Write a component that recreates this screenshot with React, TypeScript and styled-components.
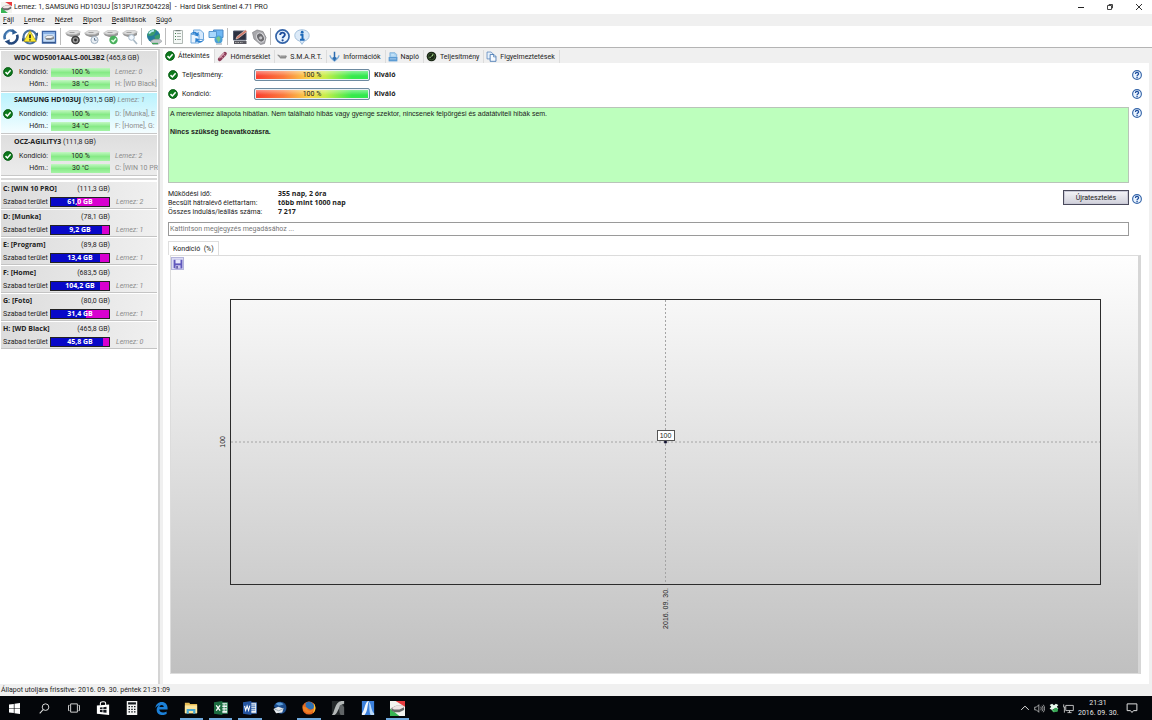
import React from "react";
import styled, { createGlobalStyle, css } from "styled-components";

const UI = `Roboto, "Open Sans", sans-serif`;
const UI_BOLD = `"Open Sans", "Noto Sans", sans-serif`;
const CLASSIC = `"Liberation Sans", Arial, sans-serif`;

const GlobalStyle = createGlobalStyle`
  *, *::before, *::after { box-sizing: border-box; }
  body { margin: 0; background: #fff; }
  button, input { font: inherit; color: inherit; margin: 0; }
  svg { display: block; flex: none; }
  ul, dl, dd, h1, h2, p { margin: 0; padding: 0; }
  ul { list-style: none; }
`;

const Screen = styled.div`
  display: flex;
  flex-direction: column;
  min-height: 100vh;
  background: #f0f0f0;
  color: #222;
  font: 7px/10px ${UI};
  white-space: nowrap;
`;

const boldText = css`
  font-family: ${UI_BOLD};
  font-weight: 700;
`;

const plainButton = css`
  border: 0;
  padding: 0;
  background: none;
  display: flex;
  align-items: center;
  justify-content: center;
`;

/* ---------- window frame ---------- */

const TitleBar = styled.header`
  display: flex;
  align-items: center;
  height: 14px;
  padding-left: 1px;
  gap: 2px;
  background: #fff;
`;

const Title = styled.h1`
  flex: 1;
  font: inherit;
  white-space: pre;
`;

const WindowButton = styled.button`
  ${plainButton}
  width: 27px;
  height: 14px;
`;

const MenuBar = styled.nav`
  display: flex;
  gap: 10px;
  height: 12px;
  padding-left: 3px;
`;

const MenuItem = styled.button`
  ${plainButton}
`;

const ToolBar = styled.div`
  display: flex;
  align-items: center;
  height: 22px;
  padding-left: 1px;
  background: #fff;
  border-bottom: 1px solid #b4b4b4;
`;

const ToolButton = styled.button`
  ${plainButton}
  width: 19px;
  height: 20px;
`;

const ToolSeparator = styled.span`
  width: 1px;
  height: 17px;
  margin: 0 2px;
  background: #bcbcbc;
`;

const Body = styled.div`
  display: flex;
  flex: 1;
  padding-top: 1px;
`;

/* ---------- sidebar ---------- */

const Sidebar = styled.aside`
  flex: none;
  width: 160px;
  padding: 1px 1px 0;
  overflow: hidden;
  background: #fff;
  border-right: 2px solid #d4d4d4;
  border-top: 1px solid #c4c4c4;
`;

const DiskList = styled.ul`
  display: flex;
  flex-direction: column;
  gap: 1px;
  padding-bottom: 2px;
  margin-bottom: 2px;
  border-bottom: 2px solid #d8d8d8;
`;

const DiskCard = styled.li<{ $selected?: boolean }>`
  height: 41px;
  border-bottom: 1px solid #c8c8c8;
  background: ${(p) =>
    p.$selected
      ? "linear-gradient(#b9f2fd, #f4fdff)"
      : "linear-gradient(#dedede, #ececec)"};
`;

const DiskName = styled.h2`
  height: 15px;
  padding-left: 13px;
  font: 400 7px/13px ${UI};
  b { ${boldText} }
`;

const Faint = styled.span`
  color: #8c8c8c;
`;

const FaintItalic = styled(Faint)`
  font-style: italic;
`;

const DiskStat = styled.div`
  display: grid;
  grid-template-columns: 13px 34px 62px 1fr;
  align-items: center;
  height: 12px;
  svg { justify-self: center; }
`;

const StatLabel = styled.span`
  text-align: right;
`;

const GreenBar = styled.span`
  height: 9px;
  margin-left: 3px;
  line-height: 9px;
  text-align: center;
  background: linear-gradient(#c3f8c3, #86ea86 50%, #a5f3a5);
`;

const StatNote = styled.span`
  padding-left: 5px;
`;

const VolumeCard = styled.li`
  display: grid;
  grid-template-columns: 47px 60px 1fr;
  align-items: center;
  height: 27px;
  margin-top: 1px;
  padding-left: 2px;
  border-bottom: 1px solid #c4c4c4;
  background: linear-gradient(100deg, #dcdcdc, #f0f0f0);
`;

const VolumeName = styled.b`
  ${boldText}
`;

const VolumeSize = styled.span`
  text-align: right;
`;

const UsageBar = styled.span<{ $used: number }>`
  height: 10px;
  border: 1px solid #222;
  color: #fff;
  ${boldText}
  line-height: 8px;
  text-align: center;
  background: linear-gradient(
    90deg,
    #0808c8 ${(p) => p.$used}%,
    #d800d0 ${(p) => p.$used}%
  );
`;

const VolumeDisk = styled(FaintItalic)`
  padding-left: 6px;
`;

/* ---------- main pane ---------- */

const Main = styled.main`
  display: flex;
  flex: 1;
  flex-direction: column;
  min-width: 0;
  padding: 0 3px 0 3px;
`;

const TabStrip = styled.div`
  display: flex;
  align-items: flex-end;
  height: 14px;
`;

const TabButton = styled.button<{ $active?: boolean }>`
  ${plainButton}
  gap: 3px;
  height: ${(p) => (p.$active ? 14 : 13)}px;
  padding: 0 4px 0 2px;
  border-right: 1px solid #dcdcdc;
  background: ${(p) => (p.$active ? "#fff" : "#f0f0f0")};
`;

const Page = styled.section`
  display: flex;
  flex: 1;
  flex-direction: column;
  padding: 2px 7px 10px 5px;
  background: #fff;
`;

const HelpRow = styled.div`
  display: grid;
  grid-template-columns: 1fr 13px;
  align-items: start;
`;

const FactsHelpRow = styled(HelpRow)`
  padding-top: 6px;
`;

const HelpButton = styled.button`
  ${plainButton}
  width: 10px;
  height: 19px;
  margin-left: 3px;
`;

const Gauge = styled.div`
  display: grid;
  grid-template-columns: 14px 72px 116px 1fr;
  align-items: center;
  height: 19px;
`;

const GaugeBar = styled.span`
  height: 12px;
  border: 1px solid #6d8aa0;
  border-radius: 2px;
  box-shadow: inset 0 0 0 1px #e8f0f4;
  line-height: 10px;
  text-align: center;
  background: linear-gradient(rgba(255, 255, 255, 0.5), rgba(255, 255, 255, 0) 60%),
    linear-gradient(90deg, #fa3b2e, #fb7a3c 25%, #fbd84a 48%, #c6ee4a 62%, #35ea4b 85%, #30e850);
`;

const GaugeVerdict = styled.b`
  ${boldText}
  padding-left: 4px;
`;

const Report = styled.div`
  height: 76px;
  margin-top: 4px;
  padding: 1px 1px;
  border: 1px solid #b9c4b9;
  background: #bdffbd;
  font: 7px/9px ${CLASSIC};
  p + p { margin-top: 9px; font-weight: 700; }
`;

const Facts = styled.dl`
  display: grid;
  grid-template-columns: 110px 1fr;
  grid-auto-rows: 9px;
  align-items: baseline;
  line-height: 9px;
  dd { ${boldText} }
`;

const FactRow = styled.div`
  display: flex;
  justify-content: space-between;
  align-items: flex-start;
`;

const RetestButton = styled.button`
  ${plainButton}
  width: 66px;
  height: 15px;
  margin-top: 1px;
  border: 1px solid #4a4a5c;
  box-shadow: inset 0 0 0 1px #c9c9d6;
  background: linear-gradient(#f4f4f8, #d0d0da);
`;

const NoteInput = styled.input`
  width: 100%;
  height: 14px;
  margin-top: 6px;
  padding: 0 1px;
  border: 1px solid #9a9a9a;
  border-radius: 0;
  background: #fff;
  &::placeholder { color: #777; opacity: 1; }
`;

const ChartTab = styled.button`
  ${plainButton}
  align-self: flex-start;
  height: 14px;
  margin-top: 5px;
  padding: 0 4px;
  border: 1px solid #dedede;
  border-bottom: 0;
  white-space: pre;
`;

const ChartPanel = styled.div`
  display: flex;
  flex: 1;
  flex-direction: column;
  margin: 0 1px 0 2px;
  border: 1px solid #dcdcdc;
  border-right: 3px solid #d6d6d6;
  background: linear-gradient(#fefefe, #c0c0c0);
`;

const SaveButton = styled.button`
  ${plainButton}
  width: 13px;
  height: 13px;
  margin: 1px 0 0;
  border: 1px solid #b4b4dc;
  background: #dcdcf4;
`;

const ChartGrid = styled.div`
  display: grid;
  flex: 1;
  grid-template-columns: 59px 1fr 37px;
  grid-template-rows: 1fr 88px;
  margin-top: 29px;
  font: 7px/8px ${CLASSIC};
`;

const VerticalText = styled.span`
  writing-mode: vertical-rl;
  transform: rotate(180deg);
`;

const YAxis = styled.div`
  display: flex;
  align-items: center;
  justify-content: flex-end;
  padding-right: 3px;
`;

const XAxis = styled.div`
  display: flex;
  grid-column: 2;
  align-items: flex-start;
  justify-content: center;
  padding-top: 3px;
`;

const Plot = styled.div`
  position: relative;
  border: 1px solid #2c2c2c;
  svg { width: 100%; height: 100%; position: absolute; }
`;

const PointLabel = styled.span`
  position: absolute;
  left: 50%;
  top: 50%;
  width: 18px;
  height: 11px;
  margin: -12px 0 0 -9px;
  border: 1px solid #555;
  line-height: 9px;
  text-align: center;
  background: #fff;
`;

const StatusBar = styled.footer`
  height: 12px;
  padding-left: 1px;
  line-height: 12px;
`;

/* ---------- taskbar ---------- */

const TaskBar = styled.nav`
  display: flex;
  justify-content: space-between;
  height: 24px;
  background: #04060a;
  color: #e8e8e8;
`;

const TaskButtons = styled.div`
  display: grid;
  grid-template-columns: repeat(14, 1fr);
  width: 412px;
`;

const TaskButton = styled.button<{ $running?: boolean }>`
  ${plainButton}
  margin: 0 3px;
  border-bottom: 2px solid ${(p) => (p.$running ? "#6fa8dc" : "transparent")};
  padding-top: 2px;
`;

const Tray = styled.div`
  display: flex;
  align-items: center;
  gap: 4px;
  padding-right: 14px;
`;

const Clock = styled.time`
  width: 40px;
  margin-right: 4px;
  text-align: center;
`;

/* ---------- icons ---------- */

const Icon = ({
  size = 16,
  box = 16,
  children,
}: {
  size?: number;
  box?: number;
  children: React.ReactNode;
}) => (
  <svg width={size} height={size} viewBox={`0 0 ${box} ${box}`} fill="none" aria-hidden="true">
    {children}
  </svg>
);

const CheckIcon = () => (
  <Icon size={10}>
    <circle cx="8" cy="8" r="7.5" fill="#0c7a1c" />
    <circle cx="8" cy="8" r="7" stroke="#0a4c14" />
    <path d="M4 8.2l3 3 5.2-6" stroke="#fff" strokeWidth="2.4" />
  </Icon>
);

const HelpIcon = ({ size = 10 }: { size?: number }) => (
  <Icon size={size}>
    <circle cx="8" cy="8" r="7" fill="#eaf4ff" stroke="#3464a8" strokeWidth="1.8" />
    <path d="M5.5 6.500c0-3.600 5-3.400 5-.3 0 1.900-2.400 1.800-2.400 3.700" stroke="#1c4c9c" strokeWidth="2" />
    <circle cx="8.100" cy="12.100" r="1.200" fill="#1c4c9c" />
  </Icon>
);

const InfoIcon = () => (
  <Icon>
    <path d="M8 .8c4.300 0 7.200 2.400 7.200 5.700 0 3-2.400 5-5 5.600L8 15.400l-2.200-3.300c-2.600-.6-5-2.600-5-5.600C.8 3.200 3.700.8 8 .8z" fill="#dceaf8" stroke="#a4c0dc" />
    <circle cx="8.200" cy="3.200" r="1.400" fill="#1c68b8" />
    <path d="M6.300 5.800h2.200v4.700M6 10.700h4.600" stroke="#1c68b8" strokeWidth="2" />
  </Icon>
);

const AnchorInfoIcon = () => (
  <Icon size={11}>
    <path d="M1.500 6c0 4 3.500 6 6.500 8.500 3-2.500 6.500-4.500 6.500-8.500" stroke="#7cacd8" strokeWidth="1.800" />
    <path d="M8 1v11M5.500 9.500L8 13l2.500-3.500" stroke="#2c6cb0" strokeWidth="2.200" />
  </Icon>
);

const RefreshIcon = () => (
  <Icon>
    <path d="M2 10.200A6.300 6.300 0 0 1 10.500 2.200" stroke="#3c70a8" strokeWidth="2.600" />
    <path d="M14 5.800A6.300 6.300 0 0 1 5.500 13.800" stroke="#24487c" strokeWidth="2.600" />
    <path d="M9.500 0l4.800 3.500-5 2.300z" fill="#2c5c94" />
    <path d="M6.500 16l-4.800-3.500 5-2.300z" fill="#24487c" />
    <path d="M3 6A5.800 5.800 0 0 1 7.500 2.200" stroke="#9cc4ec" strokeWidth=".8" />
  </Icon>
);

const RefreshWarnIcon = () => (
  <Icon>
    <circle cx="8" cy="8" r="6.500" stroke="#48709c" strokeWidth="2.200" />
    <path d="M13.500 4.500l2.500-1v4zM2.500 11.500L0 12.500v-4z" fill="#2c5080" />
    <path d="M8 1.800l6.200 10.700H1.800z" fill="#fcec30" stroke="#b0a020" strokeWidth=".8" />
    <path d="M8 5.500v3.700M8 10.200v1.400" stroke="#222" strokeWidth="1.600" />
  </Icon>
);

const DiskPanelIcon = () => (
  <Icon>
    <path d="M1.500 2.500h13v11.500h-13z" fill="#c4dcf8" stroke="#3c64a4" strokeWidth="1.400" />
    <path d="M2 3h12v2H2z" fill="#88b0e4" />
    <path d="M3.500 8l2.500-1.500h5.500l1.500 1.500v1.700l-3 1.300H5.500z" fill="#84888c" />
    <path d="M4 8l2.300-1h5l1 1-2.500 1H5z" fill="#f0f0f0" />
    <path d="M2 13.300h12" stroke="#2c4c80" />
  </Icon>
);

const DriveShape = () => (
  <>
    <path d="M.5 4.500L2 6.500 6 8h5l4-2V3.500z" fill="#989898" />
    <path d="M.5 4l4-2.500h8.500L15.500 3l-4.500 2.500H4z" fill="#dcdcdc" stroke="#b0b0b0" strokeWidth=".5" />
    <path d="M4.500 3.500h5" stroke="#a0a0a0" />
  </>
);

const DriveDarkIcon = () => (
  <Icon>
    <DriveShape />
    <circle cx="10.500" cy="11" r="3.600" fill="#9a9a9a" stroke="#3c3c3c" strokeWidth="1.500" />
    <circle cx="10.500" cy="11" r="1.400" fill="#2c2c2c" />
  </Icon>
);

const DriveClockIcon = () => (
  <Icon>
    <DriveShape />
    <circle cx="10.500" cy="11" r="3.600" fill="#e8eef4" stroke="#a0b0c0" />
    <path d="M10.500 9v2.200h2" stroke="#607890" />
  </Icon>
);

const DriveOkIcon = () => (
  <Icon>
    <DriveShape />
    <circle cx="10.500" cy="11" r="4.200" fill="#48b05c" />
    <path d="M8.500 11l1.700 1.700L13 9.500" stroke="#e4ffe4" strokeWidth="1.500" />
  </Icon>
);

const DriveSearchIcon = () => (
  <Icon>
    <DriveShape />
    <circle cx="9.500" cy="8.500" r="2.800" fill="#f2f8fe" stroke="#a8bccc" />
    <path d="M11.500 11l3.500 4" stroke="#a8b8c4" strokeWidth="1.600" />
  </Icon>
);

const GlobeIcon = () => (
  <Icon>
    <circle cx="7.500" cy="7" r="6.500" fill="#247c9c" />
    <path d="M2.500 3c3-3 7-3 8-1.500L8 6l-3 1-3.700-.5zM8.500 7l5.300-2c.8 4-1.500 7-4 8z" fill="#3c9c6c" />
    <path d="M3 4.500C4.500 2 6 1.800 8 1.500" stroke="#b8ecf4" strokeWidth="1.800" />
    <path d="M4.500 12l3.500-1.700h6l2 2-4 3H7z" fill="#c4c8cc" stroke="#84888c" strokeWidth=".5" />
    <path d="M6 14.500h6" stroke="#3ca458" strokeWidth="1.300" />
  </Icon>
);

const ReportIcon = () => (
  <Icon>
    <path d="M3.500 1.500h9v13h-9z" fill="#f4f8f6" stroke="#b0b8b4" />
    <path d="M7 4.500h4M7 7.500h4M7 10.500h4" stroke="#a4b0a8" />
    <path d="M5 4.500h1M5 7.500h1M5 10.500h1" stroke="#3c7c48" />
    <path d="M5.500 1h5v1.200h-5z" fill="#74807c" />
  </Icon>
);

const SendIcon = () => (
  <Icon>
    <path d="M4.500 1h7l3 3v6.500h-10z" fill="#d4e8fc" stroke="#70a8dc" />
    <path d="M2 5.500h8v8.500H2z" fill="#eaf4fe" stroke="#70a8dc" />
    <path d="M1 5.500C3 2 6.500 2 8 4l1.800-1-.5 4.500-4-1.200L7 5.500c-1.500-1.700-4-1-6 0zM15.500 10c-2 4-5.500 4.500-7.500 2.500l-1.800 1.200L6.500 9l4 1.300-1.500 1c1.500 1.500 4.500.7 6.500-1.300z" fill="#2c80d0" />
  </Icon>
);

const NetworkIcon = () => (
  <Icon>
    <path d="M5.500 1H15v7.500H5.500z" fill="#70b8f4" stroke="#4888c8" />
    <path d="M1 2.500h7.500v6H1z" fill="#a8d8fc" stroke="#5898d0" />
    <circle cx="10.500" cy="10.500" r="4" fill="#4ca0d8" />
    <path d="M8 9l3-2 1.500 3-2 3.500z" fill="#74c88c" />
    <path d="M8 15h6" stroke="#b0b8c0" strokeWidth="1.400" />
  </Icon>
);

const MonitorPenIcon = () => (
  <Icon>
    <path d="M1.500 2h12.500v9H1.500z" fill="#2c3040" stroke="#50586c" />
    <path d="M2 12h12.500v3H2z" fill="#585860" />
    <path d="M3 13.500h8" stroke="#b0b0b0" strokeDasharray="1.500 1" />
    <path d="M4 10l1-2.500L13.500 1 15 2.500 6.700 9z" fill="#d07868" stroke="#f4dcd4" strokeWidth=".6" />
  </Icon>
);

const SpeakerIcon = () => (
  <Icon>
    <path d="M1.500 3.500L6 1l6 1.500 3 6-1.500 6-4 1L3 10z" fill="#a8a8ac" stroke="#808084" strokeWidth=".7" />
    <ellipse cx="9.500" cy="8.500" rx="3.600" ry="4.800" transform="rotate(-30 9.500 8.500)" fill="#6c6c70" stroke="#dcdce0" />
    <circle cx="9.700" cy="8.800" r="1.600" fill="#c4c4c8" />
  </Icon>
);

const ThermoIcon = () => (
  <Icon size={11}>
    <path d="M4 12L11.500 4" stroke="#8c3c58" strokeWidth="5.500" strokeLinecap="round" />
    <path d="M3.500 10.500L10.500 3" stroke="#e0acbc" strokeWidth="1.500" />
    <path d="M6 8l3.500 3.500M9 5l3.500 3.500" stroke="#ecccd4" />
  </Icon>
);

const SmartIcon = () => (
  <Icon size={10}>
    <path d="M0 4.500h3l2 1.500 2-1h6l3 1.500-2 4H5.500L3 7.500z" fill="#8c8c8c" />
    <path d="M5 6.700l2.500-.7H13" stroke="#dcdcdc" />
  </Icon>
);

const LogIcon = () => (
  <Icon size={10}>
    <path d="M3 1h8l3 3v8H3z" fill="#a4d0f0" stroke="#6ca4d4" />
    <path d="M1 8h14v7H1z" fill="#5c9cd4" />
    <path d="M5 4h5M5 6h7M3 11h10" stroke="#d8ecfc" />
  </Icon>
);

const PerformanceIcon = () => (
  <Icon size={11}>
    <circle cx="8" cy="8" r="7" fill="#182414" />
    <circle cx="8" cy="8" r="4.800" stroke="#48683c" />
    <path d="M8 8l2.500-3M5 9h2" stroke="#b0e890" strokeWidth="1.500" />
  </Icon>
);

const CopyIcon = () => (
  <Icon size={11}>
    <path d="M1.500 1.500h6l2 2v8h-8z" fill="#e8f2fc" stroke="#4878b4" />
    <path d="M6 5h5.500l3 3v7H6z" fill="#f6faff" stroke="#3c70ac" strokeWidth="1.200" />
    <path d="M11 5v3.500h3.500" stroke="#3c70ac" />
  </Icon>
);

const SaveIcon = () => (
  <Icon size={10}>
    <path d="M1 1h14v14H3l-2-2z" fill="#6058bc" />
    <path d="M4 1h8v6H4z" fill="#e8e8fc" />
    <path d="M4 10h8v5H4z" fill="#d0ccf0" />
    <path d="M5.500 11h2v4h-2z" fill="#383088" />
  </Icon>
);

const SentinelIcon = ({ size = 11 }: { size?: number }) => (
  <Icon size={size}>
    <path d="M0 0h16v16H0z" fill="#f4f4f0" />
    <path d="M6 0h10v6z" fill="#e83c40" />
    <path d="M0 8l10 8H0z" fill="#38b454" />
    <path d="M1.500 7.500l5-2.500h7l1.500 2.500v2L10 12H5L1.500 10z" fill="#686868" />
    <path d="M2 7.500L6.500 5h7l1 2L10 9H4z" fill="#f0e4e4" />
  </Icon>
);

const WindowsIcon = () => (
  <Icon size={11}>
    <path d="M0 2.300l7-1v6.200H0zM8 1.200L16 0v7.500H8zM0 8.500h7v6.200l-7-1zM8 8.500h8V16l-8-1.200z" fill="#fff" />
  </Icon>
);

const SearchIcon = () => (
  <Icon size={11}>
    <circle cx="9.500" cy="6" r="4.800" stroke="#e0e0e0" strokeWidth="1.400" />
    <path d="M6 9.500L1 15" stroke="#e0e0e0" strokeWidth="1.500" />
  </Icon>
);

const TaskViewIcon = () => (
  <Icon size={12}>
    <path d="M3.500 2.500h9v11h-9zM2 4.500H.7v7H2M14 4.500h1.300v7H14" stroke="#d4d4d4" strokeWidth="1.300" />
  </Icon>
);

const StoreIcon = () => (
  <Icon size={14}>
    <path d="M1 5l14-1v12L1 14.500z" fill="#fff" />
    <path d="M5 5V2.500C5 .5 11 0 11 2.500V5" stroke="#fff" strokeWidth="1.200" />
    <path d="M4.500 7.300l3-.3v2.500h-3zM8.300 7l3.700-.4v2.900H8.300zM4.500 10.300h3v2.600l-3-.3zM8.300 10.300H12v3.100l-3.700-.4z" fill="#15181e" />
  </Icon>
);

const CalculatorIcon = () => (
  <Icon size={14}>
    <path d="M2 0h12v16H2z" fill="#f4f4f4" />
    <path d="M3.500 1.500h9v2.500h-9z" fill="#14181c" />
    <path d="M4 6.500h8M4 9.500h8M4 12.500h8" stroke="#14181c" strokeWidth="1.500" strokeDasharray="1.700 1.450" />
  </Icon>
);

const EdgeIcon = () => (
  <Icon size={13}>
    <path d="M.5 7.500C1 3 4 0 8.300 0c4.500 0 7.200 3.300 7.200 7.700v1.600H5.300c.2 4.200 5.700 4.500 9 2.400v3.200C9.300 17.500 2 16 2 9.800c0-3 1.800-5 4-6C4 4.300 1.500 5.500.5 7.500zM5.500 6.300h5.300c0-3.600-5-3.400-5.300 0z" fill="#1c80d8" />
  </Icon>
);

const ExplorerIcon = () => (
  <Icon size={14}>
    <path d="M1 2h5l1 1.500h8V14H1z" fill="#e8bc54" />
    <path d="M1 5h14v9H1z" fill="#fce49c" />
    <path d="M3 9h10v5.500h-2.500v-3h-5v3H3z" fill="#48a8d4" />
  </Icon>
);

const OfficeIcon = ({ color, dark, word }: { color: string; dark: string; word?: boolean }) => (
  <Icon size={14}>
    <path d="M8 2h7.500v12H8z" fill="#f0f4f4" stroke={color} />
    {word ? (
      <path d="M9 4.500h5M9 6.500h5M9 8.500h5M9 10.500h5" stroke={color} />
    ) : (
      <path d="M9 4.500h2M12 4.500h2.500M9 7.500h2M12 7.500h2.500M9 10.500h2M12 10.500h2.500" stroke={color} strokeWidth="1.500" />
    )}
    <path d="M0 1.500L9.500 0v16L0 14.500z" fill={dark} />
    {word ? (
      <path d="M1.800 5.500l1.200 5.200 1.700-5 1.700 5 1.400-5.500" stroke="#fff" strokeWidth="1.200" />
    ) : (
      <path d="M2.500 5l4.500 6M7 5l-4.500 6" stroke="#fff" strokeWidth="1.500" />
    )}
  </Icon>
);

const ThunderbirdIcon = () => (
  <Icon size={14}>
    <path d="M1 6C2 2 7-.5 11.500 1.500c4 2 5 7 2.500 10.500-2 2.500-5 3-7 2z" fill="#1c4c8c" />
    <path d="M3 3.500C6 1 10 1.500 12 4L7 5.500z" fill="#5c9cd8" />
    <path d="M.5 9L6 6.500l6 2-1.500 4.500-7 1z" fill="#e4e8ec" />
    <path d="M1.500 9l5 2.200L12 8.500" stroke="#94a4b0" />
  </Icon>
);

const FirefoxIcon = () => (
  <Icon size={14}>
    <circle cx="8" cy="8" r="7.500" fill="#e86820" />
    <path d="M4 2.500c4-3.500 9-1 10 3.500-.5 4-5 4.500-7 2.500L4.500 7z" fill="#2c70b4" />
    <path d="M1 4c0 2 1 3 3 3 2 .5 3 1 2 2.500 1.500 2.500 5 2 7-1-.5 5-5.500 6-8.500 4C1.500 11 0 7 1 4z" fill="#f08428" />
    <path d="M13.500 2.500c2.500 4 2.500 8-1 11.500 1-3 1.500-7 1-11.500z" fill="#fcc834" />
  </Icon>
);

const ArchDarkIcon = () => (
  <Icon size={14}>
    <path d="M1 0h14v16H1z" fill="#24282a" />
    <path d="M1 16C4 14 4 1 12 0h3v3C9 3 9 13 4 16z" fill="#b4b8b8" />
    <path d="M10 5c3-2 4 1 5 2v9h-4C9 13 9 8 10 5z" fill="#606466" />
  </Icon>
);

const ArchBlueIcon = () => (
  <Icon size={14}>
    <path d="M1 0h14v16H1z" fill="#3c80dc" />
    <path d="M1 14C4 12 4 2 8 0h1C7 4 8 12 4 16H1z" fill="#f0f6fe" />
    <path d="M9 1c3 1 2 10 6 13v2h-4C9 12 10 6 9 1z" fill="#b8d8f8" />
  </Icon>
);

/* ---------- data ---------- */

const MENU = ["Fájl", "Lemez", "Nézet", "Riport", "Beállítások", "Súgó"];

const TOOL_GROUPS: [string, React.ReactNode][][] = [
  [
    ["Frissítés", <RefreshIcon />],
    ["Figyelmeztetések frissítése", <RefreshWarnIcon />],
    ["Lemez panel", <DiskPanelIcon />],
  ],
  [
    ["Lemez teszt", <DriveDarkIcon />],
    ["Ütemezett teszt", <DriveClockIcon />],
    ["Rövid teszt", <DriveOkIcon />],
    ["Felületteszt", <DriveSearchIcon />],
  ],
  [["Weboldal", <GlobeIcon />]],
  [
    ["Riport", <ReportIcon />],
    ["Riport küldése", <SendIcon />],
    ["Hálózat", <NetworkIcon />],
  ],
  [
    ["Beállítások", <MonitorPenIcon />],
    ["Hangok", <SpeakerIcon />],
  ],
  [
    ["Súgó", <HelpIcon size={15} />],
    ["Névjegy", <InfoIcon />],
  ],
];

const DISKS = [
  { name: "WDC WD5001AALS-00L3B2", size: "465,8 GB", temp: "38 °C", note: "Lemez: 0", volumes: "H: [WD Black]" },
  { name: "SAMSUNG HD103UJ", size: "931,5 GB", temp: "34 °C", title: "Lemez: 1", note: "D: [Munka], E", volumes: "F: [Home], G:", selected: true },
  { name: "OCZ-AGILITY3", size: "111,8 GB", temp: "30 °C", note: "Lemez: 2", volumes: "C: [WIN 10 PR" },
];

const VOLUMES = [
  { name: "C: [WIN 10 PRO]", size: "111,3 GB", free: "61,0 GB", used: 45, disk: 2 },
  { name: "D: [Munka]", size: "78,1 GB", free: "9,2 GB", used: 88, disk: 1 },
  { name: "E: [Program]", size: "89,8 GB", free: "13,4 GB", used: 85, disk: 1 },
  { name: "F: [Home]", size: "683,5 GB", free: "104,2 GB", used: 85, disk: 1 },
  { name: "G: [Foto]", size: "80,0 GB", free: "31,4 GB", used: 61, disk: 1 },
  { name: "H: [WD Black]", size: "465,8 GB", free: "45,8 GB", used: 90, disk: 0 },
];

const TABS: [string, React.ReactNode][] = [
  ["Áttekintés", <CheckIcon />],
  ["Hőmérséklet", <ThermoIcon />],
  ["S.M.A.R.T.", <SmartIcon />],
  ["Információk", <AnchorInfoIcon />],
  ["Napló", <LogIcon />],
  ["Teljesítmény", <PerformanceIcon />],
  ["Figyelmeztetések", <CopyIcon />],
];

const FACTS = [
  ["Működési idő:", "355 nap, 2 óra"],
  ["Becsült hátralévő élettartam:", "több mint 1000 nap"],
  ["Összes indulás/leállás száma:", "7 217"],
];

const TASKS: [string, React.ReactNode, boolean?][] = [
  ["Start", <WindowsIcon />],
  ["Keresés", <SearchIcon />],
  ["Feladatnézet", <TaskViewIcon />],
  ["Áruház", <StoreIcon />],
  ["Számológép", <CalculatorIcon />],
  ["Edge", <EdgeIcon />],
  ["Fájlkezelő", <ExplorerIcon />, true],
  ["Excel", <OfficeIcon color="#2c8454" dark="#1c6c40" />, true],
  ["Word", <OfficeIcon color="#3c6cb4" dark="#2454a0" word />, true],
  ["Thunderbird", <ThunderbirdIcon />],
  ["Firefox", <FirefoxIcon />, true],
  ["ArchiCAD", <ArchDarkIcon />],
  ["ArchiCAD 64", <ArchBlueIcon />],
  ["Hard Disk Sentinel", <SentinelIcon size={15} />, true],
];

const Help = () => (
  <HelpButton aria-label="Súgó">
    <HelpIcon />
  </HelpButton>
);

export default function App() {
  return (
    <Screen>
      <GlobalStyle />
      <TitleBar>
        <SentinelIcon />
        <Title>{"Lemez: 1, SAMSUNG HD103UJ [S13PJ1RZ504228]  -  Hard Disk Sentinel 4.71 PRO"}</Title>
        <WindowButton aria-label="Kis méret">
          <Icon size={8} box={8}><path d="M1 4.500h6" stroke="#222" /></Icon>
        </WindowButton>
        <WindowButton aria-label="Előző méret">
          <Icon size={8} box={8}><path d="M1.500 2.500h4v4h-4zM3 2.500v-1h3.500V5h-1" stroke="#444" /></Icon>
        </WindowButton>
        <WindowButton aria-label="Bezárás">
          <Icon size={8} box={8}><path d="M1 1l6 6M7 1L1 7" stroke="#333" /></Icon>
        </WindowButton>
      </TitleBar>

      <MenuBar>
        {MENU.map((m) => (
          <MenuItem key={m}>
            <span><u>{m[0]}</u>{m.slice(1)}</span>
          </MenuItem>
        ))}
      </MenuBar>

      <ToolBar>
        {TOOL_GROUPS.map((group, i) => (
          <React.Fragment key={i}>
            {i > 0 && <ToolSeparator />}
            {group.map(([label, icon]) => (
              <ToolButton key={label} aria-label={label}>{icon}</ToolButton>
            ))}
          </React.Fragment>
        ))}
      </ToolBar>

      <Body>
        <Sidebar>
          <DiskList>
            {DISKS.map((d) => (
              <DiskCard key={d.name} $selected={d.selected}>
                <DiskName>
                  <b>{d.name}</b> ({d.size}) {d.title && <FaintItalic>{d.title}</FaintItalic>}
                </DiskName>
                <DiskStat>
                  <CheckIcon />
                  <StatLabel>Kondíció:</StatLabel>
                  <GreenBar>100 %</GreenBar>
                  <StatNote>
                    {d.selected ? <Faint>{d.note}</Faint> : <FaintItalic>{d.note}</FaintItalic>}
                  </StatNote>
                </DiskStat>
                <DiskStat>
                  <span />
                  <StatLabel>Hőm.:</StatLabel>
                  <GreenBar>{d.temp}</GreenBar>
                  <StatNote><Faint>{d.volumes}</Faint></StatNote>
                </DiskStat>
              </DiskCard>
            ))}
          </DiskList>
          <ul>
            {VOLUMES.map((v) => (
              <VolumeCard key={v.name}>
                <VolumeName>{v.name}</VolumeName>
                <VolumeSize>({v.size})</VolumeSize>
                <span />
                <span>Szabad terület</span>
                <UsageBar $used={v.used}>{v.free}</UsageBar>
                <VolumeDisk>Lemez: {v.disk}</VolumeDisk>
              </VolumeCard>
            ))}
          </ul>
        </Sidebar>

        <Main>
          <TabStrip role="tablist">
            {TABS.map(([label, icon], i) => (
              <TabButton key={label} role="tab" aria-selected={i === 0} $active={i === 0}>
                {icon}
                {label}
              </TabButton>
            ))}
          </TabStrip>
          <Page>
            {["Teljesítmény:", "Kondíció:"].map((label) => (
              <HelpRow key={label}>
                <Gauge>
                  <CheckIcon />
                  <span>{label}</span>
                  <GaugeBar>100 %</GaugeBar>
                  <GaugeVerdict>Kiváló</GaugeVerdict>
                </Gauge>
                <Help />
              </HelpRow>
            ))}
            <HelpRow>
              <Report>
                <p>A merevlemez állapota hibátlan. Nem található hibás vagy gyenge szektor, nincsenek felpörgési és adatátviteli hibák sem.</p>
                <p>Nincs szükség beavatkozásra.</p>
              </Report>
              <Help />
            </HelpRow>
            <FactsHelpRow>
              <FactRow>
                <Facts>
                  {FACTS.map(([k, v]) => (
                    <React.Fragment key={k}>
                      <dt>{k}</dt>
                      <dd>{v}</dd>
                    </React.Fragment>
                  ))}
                </Facts>
                <RetestButton>Újratesztelés</RetestButton>
              </FactRow>
              <Help />
            </FactsHelpRow>
            <HelpRow>
              <NoteInput aria-label="Megjegyzés" placeholder="Kattintson megjegyzés megadásához ..." />
            </HelpRow>
            <ChartTab>{"Kondíció  (%)"}</ChartTab>
            <ChartPanel>
              <SaveButton aria-label="Mentés"><SaveIcon /></SaveButton>
              <ChartGrid>
                <YAxis><VerticalText>100</VerticalText></YAxis>
                <Plot>
                  <svg aria-hidden="true">
                    <line x1="0" y1="50%" x2="100%" y2="50%" stroke="#a4a4a4" strokeDasharray="2 2" />
                    <line x1="50%" y1="0" x2="50%" y2="100%" stroke="#a4a4a4" strokeDasharray="2 2" />
                    <circle cx="50%" cy="50%" r="1.500" fill="#101030" />
                  </svg>
                  <PointLabel>100</PointLabel>
                </Plot>
                <XAxis><VerticalText>2016. 09. 30.</VerticalText></XAxis>
              </ChartGrid>
            </ChartPanel>
          </Page>
        </Main>
      </Body>

      <StatusBar>Állapot utoljára frissítve: 2016. 09. 30. péntek 21:31:09</StatusBar>

      <TaskBar>
        <TaskButtons>
          {TASKS.map(([label, icon, running]) => (
            <TaskButton key={label} aria-label={label} $running={running}>{icon}</TaskButton>
          ))}
        </TaskButtons>
        <Tray>
          <Icon size={10}><path d="M2 11l6-6 6 6" stroke="#e4e4e4" strokeWidth="1.600" /></Icon>
          <Icon size={11}>
            <path d="M1 6h2.500L7 2.500v11L3.500 10H1zM9.500 5.500c1.300 1.500 1.300 3.500 0 5M11.500 4c2 2.500 2 5.500 0 8M13.500 2.500c2.500 3.500 2.500 7.500 0 11" stroke="#e0e0e0" />
          </Icon>
          <Icon size={10}>
            <path d="M1 3l4-2 3 2.500L11 1l4 2-2.500 3L15 9l-4 2-3-2-3 2-4-2 2.500-3z" fill="#e8f8ec" />
            <path d="M4 12l4-2 4 2-4 3z" fill="#54c070" />
            <circle cx="11" cy="11" r="3.500" fill="#38a454" />
          </Icon>
          <Icon size={11}>
            <path d="M4 3.500h11v7.500H4zM9.500 11v3M6.500 14h6M1 2v4h2M2 6v8" stroke="#e0e0e0" strokeWidth="1.200" />
          </Icon>
          <Clock>
            21:31
            <br />
            2016. 09. 30.
          </Clock>
          <Icon size={12}>
            <path d="M1.500 2.500h13v9H10L8 14l-2-2.500H1.500z" stroke="#e4e4e4" strokeWidth="1.300" />
          </Icon>
        </Tray>
      </TaskBar>
    </Screen>
  );
}
